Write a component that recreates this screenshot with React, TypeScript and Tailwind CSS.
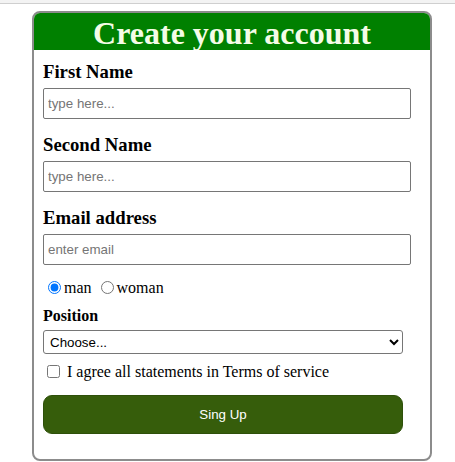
import React from 'react';

const serif = "font-['Times_New_Roman','Liberation_Serif',serif]";
const sans = "font-['Arial','Liberation_Sans',sans-serif]";

export default function App() {
  return (
    <div className="w-[455px] h-[462px] bg-white overflow-hidden">
      {/* browser chrome edge */}
      <div className="h-[3px] bg-[#f3f3f3]" />
      <div className="h-[1px] bg-[#cfcfcf]" />

      <div className={`ml-[32px] mt-[7px] w-[400px] border-2 border-[#8c8c8c] rounded-[8px] ${serif} text-black`}>
        <h1 className="h-[37px] pt-[2px] leading-[37px] overflow-hidden bg-[#008000] text-[#f4fce6] text-[32px] font-bold text-center rounded-t-[6px]">
          Create your account
        </h1>

        <form className="pl-[9px] pr-[19px] pb-[25px] flex flex-col">
          <label className="mt-[11px] leading-[22px] text-[18.72px] font-bold">First Name</label>
          <input
            placeholder="type here..."
            className={`mt-[5px] h-[31px] border border-[#767676] rounded-[2px] pl-[4px] text-[13.33px] ${sans} placeholder:text-[#757575]`}
          />

          <label className="mt-[15px] leading-[22px] text-[18.72px] font-bold">Second Name</label>
          <input
            placeholder="type here..."
            className={`mt-[5px] h-[31px] border border-[#767676] rounded-[2px] pl-[4px] text-[13.33px] ${sans} placeholder:text-[#757575]`}
          />

          <label className="mt-[15px] leading-[22px] text-[18.72px] font-bold">Email address</label>
          <input
            type="email"
            placeholder="enter email"
            className={`mt-[5px] h-[31px] border border-[#767676] rounded-[2px] pl-[4px] text-[13.33px] ${sans} placeholder:text-[#757575]`}
          />

          <div className="mt-[13px] leading-[20px] text-[16px]">
            <label>
              <input type="radio" name="sex" defaultChecked className="ml-[5px] mr-[3px] mt-[3px] align-[-1px]" />
              man
            </label>{' '}
            <label>
              <input type="radio" name="sex" className="ml-[5px] mr-[3px] mt-[3px] align-[-1px]" />
              woman
            </label>
          </div>

          <label className="mt-[8px] leading-[20px] text-[16px] font-bold">Position</label>
          <select
            defaultValue=""
            className={`mt-[4px] w-[360px] h-[24px] border border-[#767676] rounded-[3px] pl-[2px] text-[13.33px] ${sans} text-black`}
          >
            <option value="">Choose...</option>
            <option>Manager</option>
            <option>Developer</option>
          </select>

          <div className="mt-[8px] leading-[20px] text-[16px]">
            <label>
              <input type="checkbox" className="ml-[4px] mr-[3px] my-[3px] align-[-1px]" /> I agree all statements in Terms of service
            </label>
          </div>

          <button
            type="button"
            className={`mt-[13px] w-[360px] h-[39px] pt-[1px] bg-[#365d0b] border border-[#2e500a] rounded-[9px] text-white text-[13.33px] ${sans}`}
          >
            Sing Up
          </button>
        </form>
      </div>
    </div>
  );
}
